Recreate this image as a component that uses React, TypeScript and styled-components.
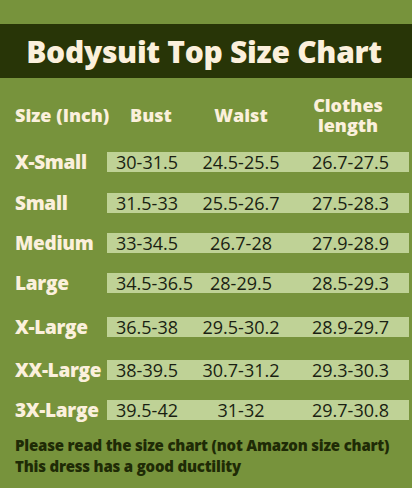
import React from "react";
import styled, { createGlobalStyle } from "styled-components";

const Global = createGlobalStyle`
  html, body { margin: 0; padding: 0; background: #77933c; }
  body { width: 412px; height: 488px; overflow: hidden; }
`;

const Page = styled.div`
  width: 412px;
  height: 488px;
  background: #77933c;
  padding-top: 24px;
  box-sizing: border-box;
  font-family: "Open Sans", "Noto Sans", sans-serif;
`;

const TitleBar = styled.div`
  height: 54px;
  background: #283507;
  display: flex;
  align-items: center;
  justify-content: center;
`;

const Title = styled.h1`
  margin: 0;
  font-size: 30px;
  font-weight: 800;
  color: #fbf0dc;
  letter-spacing: -0.3px;
  padding-right: 4px;
`;

const Table = styled.div`
  display: flex;
  flex-direction: column;
`;

const HeaderRow = styled.div`
  height: 74px;
  display: grid;
  grid-template-columns: 107px 88px 92px 122px;
  align-items: center;
`;

const HeadCell = styled.div<{ $pad?: number; $center?: boolean }>`
  font-size: 18px;
  font-weight: 800;
  line-height: 20px;
  color: #fbf0dc;
  padding-left: ${(p) => p.$pad ?? 0}px;
  text-align: ${(p) => (p.$center ? "center" : "left")};
  white-space: nowrap;
`;

const HeadLine = styled.span`
  display: block;
  height: 20px;
`;

const Row = styled.div<{ $gap: number }>`
  margin-top: ${(p) => p.$gap}px;
  display: grid;
  grid-template-columns: 107px 302px;
  align-items: center;
  height: 20px;
`;

const SizeLabel = styled.div`
  padding-left: 15px;
  font-size: 19px;
  font-weight: 800;
  line-height: 17px;
  color: #fbf0dc;
  white-space: nowrap;
  letter-spacing: -0.3px;
`;

const Bar = styled.div`
  height: 20px;
  background: #bfd296;
  display: grid;
  grid-template-columns: 88px 92px 122px;
  align-items: center;
`;

const Value = styled.div<{ $align: "left" | "center"; $pad?: number }>`
  font-size: 18px;
  font-weight: 400;
  line-height: 20px;
  color: #1a1f12;
  text-align: ${(p) => p.$align};
  padding-left: ${(p) => p.$pad ?? 0}px;
  white-space: nowrap;
`;

const Footer = styled.div`
  margin-top: 15px;
  padding-left: 15px;
  font-size: 15px;
  font-weight: 800;
  line-height: 21px;
  color: #1f2b06;
  letter-spacing: -0.2px;
`;

const rows = [
  { size: "X-Small", bust: "30-31.5", waist: "24.5-25.5", length: "26.7-27.5", gap: 0 },
  { size: "Small", bust: "31.5-33", waist: "25.5-26.7", length: "27.5-28.3", gap: 21 },
  { size: "Medium", bust: "33-34.5", waist: "26.7-28", length: "27.9-28.9", gap: 20 },
  { size: "Large", bust: "34.5-36.5", waist: "28-29.5", length: "28.5-29.3", gap: 20 },
  { size: "X-Large", bust: "36.5-38", waist: "29.5-30.2", length: "28.9-29.7", gap: 24 },
  { size: "XX-Large", bust: "38-39.5", waist: "30.7-31.2", length: "29.3-30.3", gap: 23 },
  { size: "3X-Large", bust: "39.5-42", waist: "31-32", length: "29.7-30.8", gap: 20 },
];

export default function App() {
  return (
    <>
      <Global />
      <Page>
        <TitleBar>
          <Title>Bodysuit Top Size Chart</Title>
        </TitleBar>
        <Table>
          <HeaderRow>
            <HeadCell $pad={15}>Size (Inch)</HeadCell>
            <HeadCell $pad={23}>Bust</HeadCell>
            <HeadCell $center>Waist</HeadCell>
            <HeadCell $center>
              <HeadLine>Clothes</HeadLine>
              <HeadLine>length</HeadLine>
            </HeadCell>
          </HeaderRow>
          {rows.map((r) => (
            <Row key={r.size} $gap={r.gap}>
              <SizeLabel>{r.size}</SizeLabel>
              <Bar>
                <Value $align="left" $pad={9}>{r.bust}</Value>
                <Value $align="center">{r.waist}</Value>
                <Value $align="left" $pad={25}>{r.length}</Value>
              </Bar>
            </Row>
          ))}
        </Table>
        <Footer>
          Please read the size chart (not Amazon size chart)
          <br />
          This dress has a good ductility
        </Footer>
      </Page>
    </>
  );
}
